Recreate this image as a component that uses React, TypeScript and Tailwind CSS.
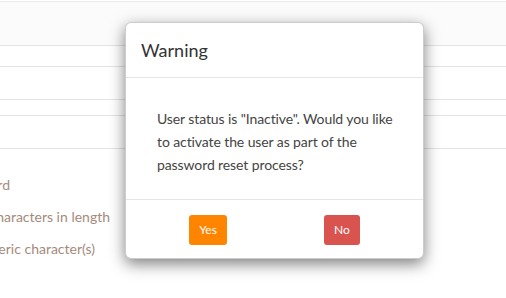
import React from "react";

export default function App() {
  const font = { fontFamily: "Lato, 'Open Sans', sans-serif" };
  return (
    <div
      className="relative w-[506px] h-[298px] overflow-hidden bg-white"
      style={font}
    >
      {/* background page */}
      <div className="flex flex-col">
        <div className="mt-[1px] h-[44px] border-t border-[#ececec] bg-[#fbfbfb]" />
        <div className="h-[21px] border-t border-[#e3e3e3]" />
        <div className="h-[33px] border-t border-[#e3e3e3]" />
        <div className="h-[16px] border-t border-[#e3e3e3]" />
        <div className="h-[33px] border-t border-[#e3e3e3]" />
        <div className="border-t border-[#e3e3e3]" />
        <div className="flex flex-col gap-[10px] pt-[25px] text-[14px] leading-[22px] text-[#a58a7c]">
          <div className="flex w-[10px] justify-end whitespace-nowrap">
            Reset password
          </div>
          <div className="flex w-[110px] justify-end whitespace-nowrap">
            Must be at least 8 characters in length
          </div>
          <div className="flex w-[95px] justify-end whitespace-nowrap">
            Must contain at least 1 numeric character(s)
          </div>
        </div>
      </div>

      {/* modal */}
      <div className="absolute left-[125px] top-[22px] w-[299px] rounded-[6px] border border-[#00000033] bg-white shadow-[0_5px_15px_rgba(0,0,0,0.5)]">
        <div className="flex h-[55px] items-center border-b border-[#e5e5e5] px-[15px] text-[18px] text-[#333]">
          Warning
        </div>
        <div className="h-[121px] pl-[31px] pr-[12px] pt-[29px] text-[14px] leading-[23px] tracking-[-0.1px] text-[#444]">
          <p className="w-[240px]">
            User status is "Inactive". Would you like to activate the user as part of the password reset process?
          </p>
        </div>
        <div className="flex h-[59px] items-start justify-center gap-[97px] border-t border-[#e5e5e5] pt-[15px]">
          <button className="h-[30px] w-[38px] rounded-[3px] bg-[#ff8400] text-[12px] text-white">
            Yes
          </button>
          <button className="h-[30px] w-[36px] rounded-[3px] bg-[#d9534f] text-[12px] text-white">
            No
          </button>
        </div>
      </div>
    </div>
  );
}
